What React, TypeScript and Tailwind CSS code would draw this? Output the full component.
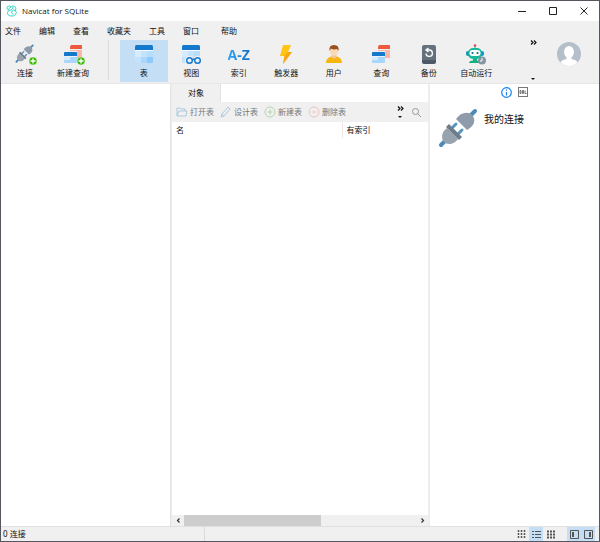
import type { ReactNode } from "react";

const MENUS = ["文件", "编辑", "查看", "收藏夹", "工具", "窗口", "帮助"];

function Plug() {
  return (
    <g>
      <path d="M3 37 8 32M32 8 37 3" stroke="#4b8bb9" strokeWidth="4" strokeLinecap="round" />
      <path d="M13 21 18 16M19 27 24 22" stroke="#5795c0" strokeWidth="3" strokeLinecap="round" />
      <path d="M9 20 20 31C16 37 9 37 6 34S3 24 9 20Z" fill="#97a3af" />
      <path d="M8 19 11 16 24 29 21 32Z" fill="#6f7c8a" />
      <path d="M18 11 29 22C37 18 38 11 34 7S23 4 18 11Z" fill="#8e9baa" />
    </g>
  );
}

function PlusBadge() {
  return (
    <g>
      <circle cx="20" cy="17" r="4" fill="#38b900" stroke="#f0f0f0" strokeWidth=".5" />
      <path d="M17.500 17h5M20 14.500v5" stroke="#fff" strokeWidth="1.300" />
    </g>
  );
}

function TableGrid() {
  return (
    <g>
      <rect x="3" y="1" width="18" height="18" rx="1.500" fill="#b9ddfc" />
      <path d="M3 7h6v6H3z" fill="#d6ecfe" />
      <path d="M9 7h6v6H9zM3 13h6v6H4.500Q3 19 3 17.500z" fill="#c3e2fd" />
      <path d="M15 13h6v4.500q0 1.500-1.500 1.500H15z" fill="#8ec9fa" />
      <path d="M9 13h6v6H9z" fill="#a9d6fb" />
      <path d="M3 6V2.500Q3 1 4.500 1h15Q21 1 21 2.500V6z" fill="#1478cd" />
      <path d="M3 6.500h18" stroke="#f4faff" />
    </g>
  );
}

function QueryArt() {
  return (
    <g>
      <path d="M9 3.500Q9 1 10.500 1h10Q21 1 21 2v3H9z" fill="#ee5a3e" />
      <path d="M9 6h12v8H9z" fill="#f8b8a5" />
      <path d="M2 7h14v12H2z" fill="#f0f0f0" />
      <path d="M4 8h11q1 0 1 1v3H3V9q0-1 1-1z" fill="#1478cd" />
      <path d="M3 13h13v5q0 1-1 1H4q-1 0-1-1z" fill="#a8d7fb" />
      <path d="M3 13h6v3H3z" fill="#d5ecfe" />
    </g>
  );
}

const TOOL_ART: Record<string, ReactNode> = {
  连接: (
    <g>
      <g transform="translate(2 0) scale(.48)"><Plug /></g>
      <PlusBadge />
    </g>
  ),
  新建查询: <g><QueryArt /><PlusBadge /></g>,
  表: <TableGrid />,
  视图: (
    <g>
      <TableGrid />
      <g stroke="#f0f0f0" strokeWidth="3.500" fill="none"><circle cx="10.500" cy="16.500" r="3" /><circle cx="18.500" cy="16.500" r="3" /></g>
      <g stroke="#1478cd" strokeWidth="1.400" fill="#e3f2fe"><circle cx="10.500" cy="16.500" r="2.800" /><circle cx="18.500" cy="16.500" r="2.800" /><path d="M13 16q1.500-1.500 3 0" fill="none" /></g>
    </g>
  ),
  触发器: (
    <g>
      <path d="M9 1h8l-3 7h4L9 20l1.500-8H6z" fill="#ffc414" />
      <path d="m14 8 4 0L9 20l1.500-8z" fill="#f9a51a" />
    </g>
  ),
  用户: (
    <g>
      <path d="M4 19q0-5 5-6.500h6q5 1.500 5 6.500z" fill="#f7b60d" />
      <path d="M9.500 11h5v2.500q-2.500 2-5 0z" fill="#f3c69c" />
      <ellipse cx="12" cy="7" rx="4" ry="5" fill="#fbd9b5" />
      <path d="M7.500 7Q6.500 1 12 1t4.500 6L15 5Q11 6 9 4.500z" fill="#99501b" />
    </g>
  ),
  查询: <QueryArt />,
  备份: (
    <g>
      <rect x="5" y="1" width="14" height="18" rx="2" fill="#65717d" />
      <path d="M5 16h14v2q0 2-2 2H7q-2 0-2-2z" fill="#4d5966" />
      <path d="M9 9.500A3.200 3.200 0 1 0 12 6H9.500M11.500 4 9 6l2.500 2" fill="none" stroke="#fff" strokeWidth="1.400" />
    </g>
  ),
  自动运行: (
    <g>
      <path d="M11 2v4" stroke="#19b39a" />
      <circle cx="11" cy="1.500" r="1.300" fill="#f0474f" />
      <rect x="2" y="7" width="18" height="5" rx="2" fill="#158fc2" />
      <rect x="4" y="4" width="14" height="11" rx="5" fill="#17b89d" />
      <rect x="5.500" y="6" width="11" height="6" rx="3" fill="#fff" />
      <circle cx="8.500" cy="9" r="1.100" fill="#126794" /><circle cx="13.500" cy="9" r="1.100" fill="#126794" />
      <path d="M5 19q0-2.500 4-2.500V15h4v1.500q4 0 4 2.500z" fill="#13b47c" />
      <circle cx="18" cy="16.500" r="4" fill="#8695a3" />
      <path d="M18 14v3h-2" stroke="#fff" fill="none" />
    </g>
  ),
};

function Tool({ name, active = false }: { name: string; active?: boolean }) {
  return (
    <button className={`flex h-[42px] min-w-0 flex-1 flex-col items-center gap-0.5 pt-1 ${active ? "bg-[#c3def5]" : ""}`}>
      {name === "索引" ? (
        <span aria-hidden="true" className="flex h-[22px] items-center bg-linear-to-r from-[#2fa5f7] to-[#1270c4] bg-clip-text font-['Open_Sans',sans-serif] text-sm font-bold text-transparent">A-Z</span>
      ) : (
        <svg aria-hidden="true" className="h-[22px] w-6" viewBox="0 0 24 22" fill="none">{TOOL_ART[name]}</svg>
      )}
      <span className="whitespace-nowrap leading-[10px]">{name}</span>
    </button>
  );
}

const ACTION_ART: Record<string, ReactNode> = {
  打开表: <path d="M1 10V2h3l1 1h4v2h2l-1 5zM1 10l2-5h6" stroke="#acc9dc" />,
  设计表: <path d="m1 11 1-3 6-7 2 2-6 7zM2 8l2 2" stroke="#acc9dc" />,
  新建表: <g stroke="#b5d6ab"><circle cx="6" cy="6" r="5" /><path d="M3.500 6h5M6 3.500v5" /></g>,
  删除表: <g stroke="#ecc4bf"><circle cx="6" cy="6" r="5" /><path d="M3.500 6h5" /></g>,
};

function More({ label, className }: { label: string; className: string }) {
  return (
    <button aria-label={label} className={`flex flex-col items-center justify-between ${className}`}>
      <svg className="h-[5px] w-[7px]" viewBox="0 0 7 5" fill="none" stroke="#111" strokeWidth="1.200"><path d="m1 .5 2 2-2 2M4 .5l2 2-2 2" /></svg>
      <svg className="h-0.5 w-1" viewBox="0 0 4 2"><path d="M0 0h4L2 2z" fill="#111" /></svg>
    </button>
  );
}

function ViewToggle({ label, active = false, children }: { label: string; active?: boolean; children: ReactNode }) {
  return (
    <button aria-label={label} className={`flex h-[14px] w-[14px] items-center justify-center ${active ? "bg-[#c3def5]" : ""}`}>
      <svg className="h-[9px] w-[9px]" viewBox="0 0 9 9" fill="none" stroke="#555">{children}</svg>
    </button>
  );
}

export default function App() {
  return (
    <div className="flex min-h-screen flex-col border border-[#56565f] bg-white font-['Noto_Sans','Noto_Sans_CJK_SC',sans-serif] text-[8px] leading-[10px] text-[#111]">
      <header className="flex h-5 items-center">
        <svg aria-hidden="true" className="ml-[5px] h-3 w-3" viewBox="0 0 12 12" fill="none" stroke="#36d8c4">
          <path d="M2 5Q0 3 1.500 1.500T5 2Q7 0 9 1.500T9 5q2.500 2.500.5 4.500T5 11Q1 10.500 1.500 7.500T5 5q2-1 2-3M2 5q1-2 3-3M7 9.500Q5 8 6 6t4 0" />
        </svg>
        <h1 className="ml-1 font-['Open_Sans',sans-serif]">Navicat for SQLite</h1>
        <div className="ml-auto flex items-center">
          <button aria-label="最小化" className="flex w-[31px] justify-center"><svg className="h-2 w-2" viewBox="0 0 8 8" stroke="#222"><path d="M0 4.500h8" /></svg></button>
          <button aria-label="最大化" className="flex w-[31px] justify-center"><svg className="h-2 w-2" viewBox="0 0 8 8" stroke="#222" fill="none"><path d="M.5.500h7v7h-7z" /></svg></button>
          <button aria-label="关闭" className="flex w-[31px] justify-center"><svg className="h-2 w-2" viewBox="0 0 8 8" stroke="#222"><path d="m.5.5 7 7m0-7-7 7" /></svg></button>
        </div>
      </header>

      <nav className="flex h-[19px] items-center gap-[18px] bg-[#f0f0f0] pl-1">
        {MENUS.map((m) => <button key={m} className="last:ml-1">{m}</button>)}
      </nav>

      <div className="flex h-11 items-start border-b border-[#e6e6e6] bg-[#f0f0f0]">
        <div className="flex w-24"><Tool name="连接" /><Tool name="新建查询" /></div>
        <div className="mx-[11px] h-10 w-px bg-[#dadada]" />
        <div className="flex w-[380px]">
          {["表", "视图", "索引", "触发器", "用户", "查询", "备份", "自动运行"].map((n) => <Tool key={n} name={n} active={n === "表"} />)}
        </div>
        <div className="flex flex-1 justify-end pr-[18px]">
          <More label="更多工具" className="mr-[18px] h-10 w-3" />
          <button aria-label="账户" className="mt-0.5 h-6 w-6">
            <svg viewBox="0 0 24 24"><defs><clipPath id="avatar"><circle cx="12" cy="12" r="12" /></clipPath></defs><g clipPath="url(#avatar)"><path d="M0 0h24v24H0z" fill="#b4bfca" /><ellipse cx="12" cy="10" rx="5" ry="6" fill="#fff" /><path d="M9.500 14h5v3q6 1 6 4l-3 3h-11l-3-3q0-3 6-4z" fill="#fff" /></g></svg>
          </button>
        </div>
      </div>

      <main className="flex flex-1">
        <aside className="w-[170px] shrink-0 border-r border-[#e3e3e3]" aria-label="连接" />
        <section className="flex min-w-0 flex-1 flex-col border-x border-[#ededed]">
          <div className="flex h-[18px]">
            <button className="w-[49px] border-r border-[#e3e3e3] bg-[#f0f0f0]">对象</button>
          </div>
          <div className="flex h-5 items-center bg-[#f0f0f0] px-1 text-[#777]">
            {["打开表", "设计表", "新建表", "删除表"].map((a) => (
              <button key={a} className="flex w-11 shrink-0 items-center gap-0.5 whitespace-nowrap">
                <svg aria-hidden="true" className="h-3 w-3 shrink-0" viewBox="0 0 12 12" fill="none">{ACTION_ART[a]}</svg>{a}
              </button>
            ))}
            <More label="更多操作" className="ml-auto h-3 w-3" />
            <button aria-label="搜索" className="ml-1 mr-0.5 flex w-3 justify-center"><svg className="h-[9px] w-[9px]" viewBox="0 0 9 9" fill="none" stroke="#999"><circle cx="3.500" cy="3.500" r="3" /><path d="m6 6 3 3" /></svg></button>
          </div>
          <table className="w-full table-fixed text-left">
            <thead>
              <tr className="h-4">
                <th className="w-[170px] border-r border-[#e8e8e8] pl-1 font-normal">名</th>
                <th className="pl-1 font-normal">有索引</th>
              </tr>
            </thead>
          </table>
          <div className="mt-auto flex h-[11px] items-stretch bg-[#f0f0f0]">
            <button aria-label="向左滚动" className="flex w-3 items-center justify-center"><svg className="h-[5px] w-[5px]" viewBox="0 0 5 5" fill="none" stroke="#333" strokeWidth="1.200"><path d="M3.500.5 1.500 2.500l2 2" /></svg></button>
            <div className="flex-1"><div className="h-full w-[59%] bg-[#cdcdcd]" /></div>
            <button aria-label="向右滚动" className="flex w-3 items-center justify-center"><svg className="h-[5px] w-[5px]" viewBox="0 0 5 5" fill="none" stroke="#333" strokeWidth="1.200"><path d="m1.500.5 2 2-2 2" /></svg></button>
          </div>
        </section>
        <aside className="w-[170px] shrink-0 border-l border-[#ededed]">
          <div className="flex h-4 items-center justify-center gap-1.5">
            <button aria-label="信息"><svg className="h-[11px] w-[11px]" viewBox="0 0 11 11" fill="none" stroke="#1683ef" strokeWidth="1.200"><circle cx="5.500" cy="5.500" r="4.800" /><path d="M5.500 5v3.500M5.500 2.500v1.200" /></svg></button>
            <button aria-label="DDL" className="flex h-[10px] w-[10px] items-center justify-center border border-[#777]">
              <svg className="h-1 w-2" viewBox="0 0 8 4" fill="none" stroke="#555" strokeWidth=".8"><path d="M1 .5v3h1v-3zM3.500 .5v3h1v-3zM6 .5v3h1.500" /></svg>
            </button>
          </div>
          <div className="flex items-start gap-1.5 pl-2 pt-2">
            <svg aria-hidden="true" className="h-10 w-10 shrink-0" viewBox="0 0 40 40" fill="none"><Plug /></svg>
            <h2 className="pt-1 text-[10px] leading-[14px]">我的连接</h2>
          </div>
        </aside>
      </main>

      <footer className="flex h-[15px] items-center border-t border-[#e0e0e0] bg-[#f0f0f0] pl-0.5 pr-1">
        <div className="flex h-full w-[202px] items-center border-r border-[#dadada]">0 连接</div>
        <div className="ml-auto flex items-center gap-px">
          <ViewToggle label="列表"><path d="M1.500 0v9M4.500 0v9M7.500 0v9" strokeDasharray="2 1" strokeWidth="1.500" /></ViewToggle>
          <ViewToggle label="详细信息" active><path d="M0 1.500h2M3 1.500h6M0 4.500h2M3 4.500h6M0 7.500h2M3 7.500h6" /></ViewToggle>
          <ViewToggle label="ER 图表"><path d="M0 1.500h9M0 4.500h9M0 7.500h9" strokeDasharray="2 1" strokeWidth="2" /></ViewToggle>
          <div className="flex pl-2">
            <ViewToggle label="导航窗格" active><path d="M.5.5h8v8h-8z" /><path d="M3 2v5" strokeWidth="2" /></ViewToggle>
            <ViewToggle label="信息窗格" active><path d="M.5.5h8v8h-8z" /><path d="M6 2v5" strokeWidth="2" /></ViewToggle>
          </div>
        </div>
      </footer>
    </div>
  );
}
